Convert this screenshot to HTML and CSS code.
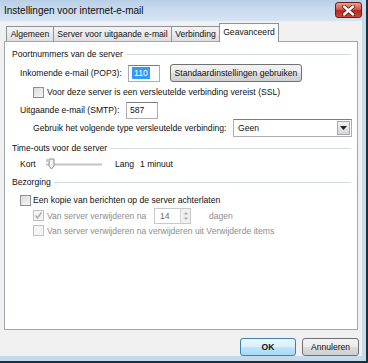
FILE: index.html
```html
<!DOCTYPE html>
<html lang="nl">
<head>
    <meta charset="UTF-8">
    <title>Instellingen voor internet-e-mail</title>
    <link rel="stylesheet" href="styles.css">
</head>
<body>
    <div class="window">
        <div class="titlebar">
            <span class="title">Instellingen voor internet-e-mail</span>
            <div class="close">
                <svg width="13" height="11" viewBox="0 0 13 11">
                    <path d="M2 1.5 L11 9.5 M11 1.5 L2 9.5" stroke="#5a1510" stroke-width="4" stroke-linecap="round"/>
                    <path d="M2 1.5 L11 9.5 M11 1.5 L2 9.5" stroke="#fff" stroke-width="2.4" stroke-linecap="round"/>
                </svg>
            </div>
        </div>

        <div class="client">
            <!-- Tabbladen -->
            <div class="tabs">
                <div class="tab tab-1">Algemeen</div>
                <div class="tab tab-2">Server voor uitgaande e-mail</div>
                <div class="tab tab-3">Verbinding</div>
                <div class="tab active">Geavanceerd</div>
            </div>

            <div class="panel">
                <div class="group-head"><span>Poortnummers van de server</span></div>

                <div class="row row-pop">
                    <span class="label label-pop">Inkomende e-mail (POP3):</span>
                    <div class="input input-pop"><span class="selected">110</span></div>
                    <div class="btn btn-default-settings">Standaardinstellingen gebruiken</div>
                </div>

                <div class="row row-ssl sub">
                    <span class="check"></span>
                    <span class="check-text">Voor deze server is een versleutelde verbinding vereist (SSL)</span>
                </div>

                <div class="row row-smtp">
                    <span class="label label-smtp">Uitgaande e-mail (SMTP):</span>
                    <div class="input input-smtp">587</div>
                </div>

                <div class="row row-type sub">
                    <span class="label label-type">Gebruik het volgende type versleutelde verbinding:</span>
                    <div class="select">
                        <span>Geen</span>
                        <span class="select-arrow">
                            <svg width="7" height="4" viewBox="0 0 7 4"><path d="M0 0 H7 L3.5 4 Z" fill="#222"/></svg>
                        </span>
                    </div>
                </div>

                <div class="group-head group-timeout"><span>Time-outs voor de server</span></div>

                <div class="row row-slider">
                    <span class="label label-kort">Kort</span>
                    <svg class="slider" width="58" height="12" viewBox="0 0 58 12">
                        <line x1="1" y1="6.5" x2="57" y2="6.5" stroke="#c4c4c4" stroke-width="2"/>
                        <line x1="2" y1="1" x2="2" y2="4" stroke="#999"/>
                        <path d="M4 1 H9 V8 L6.5 11 L4 8 Z" fill="#eef0f2" stroke="#8a8f96" stroke-width="1"/>
                    </svg>
                    <span class="label label-lang">Lang</span>
                    <span>1 minuut</span>
                </div>

                <div class="group-head group-delivery"><span>Bezorging</span></div>

                <div class="row row-copy">
                    <span class="check"></span>
                    <span class="check-text copy-text">Een kopie van berichten op de server achterlaten</span>
                </div>

                <div class="row row-days sub disabled">
                    <span class="check checked">
                        <svg width="9" height="9" viewBox="0 0 9 9"><path d="M1.5 4.5 L3.5 7 L7.5 1.5" stroke="#a9b2bb" stroke-width="1.6" fill="none"/></svg>
                    </span>
                    <span class="check-text days-text">Van server verwijderen na</span>
                    <div class="spin">
                        <span class="spin-value">14</span>
                        <span class="spin-buttons">
                            <svg width="8" height="12" viewBox="0 0 8 12">
                                <path d="M1.5 4.5 L4 2 L6.5 4.5 Z" fill="#b0b0b0"/>
                                <path d="M1.5 7.5 L4 10 L6.5 7.5 Z" fill="#b0b0b0"/>
                            </svg>
                        </span>
                    </div>
                    <span class="days-unit">dagen</span>
                </div>

                <div class="row row-deleted sub disabled">
                    <span class="check"></span>
                    <span class="check-text">Van server verwijderen na verwijderen uit Verwijderde items</span>
                </div>
            </div>

            <div class="footer">
                <div class="btn btn-ok">OK</div>
                <div class="btn btn-cancel">Annuleren</div>
            </div>
        </div>
    </div>
</body>
</html>
```

FILE: styles.css
```css
* {
    margin: 0;
    padding: 0;
    box-sizing: border-box;
}

body {
    width: 368px;
    height: 363px;
    overflow: hidden;
    background: #1e2e3b;
    font-family: "Liberation Sans", Arial, sans-serif;
    font-size: 8.6px;
    color: #111;
    white-space: nowrap;
}

.window {
    width: 366px;
    height: 361px;
    border-right: 4px solid #c6daee;
    border-bottom: 5px solid #c6daee;
    display: flex;
    flex-direction: column;
}

/* Titelbalk */
.titlebar {
    height: 22px;
    display: flex;
    align-items: flex-start;
    justify-content: space-between;
    background: linear-gradient(180deg, #b8cfe8 0%, #cadcef 50%, #d6e4f3 100%);
}

.title {
    font-size: 10px;
    padding: 5px 0 0 4px;
    color: #0c0c0c;
}

.close {
    width: 27px;
    height: 16px;
    margin: 2px 0 0 0;
    border: 1px solid #6b1d18;
    border-radius: 3px;
    background: linear-gradient(180deg, #e7a193 0%, #d0574a 45%, #b62b21 55%, #c9473a 100%);
    display: flex;
    align-items: center;
    justify-content: center;
}

/* Venster inhoud */
.client {
    flex: 1;
    background: #f0f0f0;
    padding-top: 1px;
    display: flex;
    flex-direction: column;
}

.tabs {
    display: flex;
    align-items: flex-end;
    height: 19px;
    padding-left: 6px;
    position: relative;
    z-index: 1;
}

.tab {
    height: 15px;
    border: 1px solid #8e939b;
    border-bottom: none;
    background: linear-gradient(180deg, #f3f3f3 0%, #ebebeb 50%, #dedede 100%);
    display: flex;
    align-items: center;
    justify-content: center;
    margin-right: -1px;
    padding-bottom: 1px;
}

.tab-1 { width: 48px; }
.tab-2 { width: 119px; }
.tab-3 { width: 49px; }

.tab.active {
    width: 60px;
    height: 19px;
    background: #fff;
    margin-bottom: -1px;
    padding-bottom: 2px;
}

.panel {
    height: 289px;
    margin: 0 4px;
    border: 1px solid #a2a6ad;
    background: #fff;
    padding-top: 5px;
}

.group-head {
    height: 14px;
    display: flex;
    align-items: center;
    padding: 0 6px 0 7px;
}

.group-head::after {
    content: "";
    flex: 1;
    height: 1px;
    margin-left: 3px;
    background: #d5dbe0;
}

.group-timeout { margin-top: 4px; }
.group-delivery { margin-top: 4px; }

.row {
    display: flex;
    align-items: center;
    padding-left: 15px;
}

.row.sub { padding-left: 28px; }

.row-pop { height: 22px; margin-top: 1px; }
.row-ssl { height: 16px; }
.row-smtp { height: 18px; margin-top: 1px; }
.row-type { height: 18px; }
.row-slider { height: 14px; margin-top: 2px; }
.row-copy { height: 16px; margin-top: 3px; }
.row-days { height: 15px; }
.row-deleted { height: 15px; }

.label { flex: none; }
.label-pop { width: 108px; }
.label-smtp { width: 106px; }
.label-type { width: 200px; }
.label-kort { width: 25px; }
.label-lang { width: 25px; margin-left: 12px; }

.input {
    height: 17px;
    border: 1px solid #abadb3;
    border-top-color: #7a7d84;
    background: #fff;
    display: flex;
    align-items: center;
    padding-left: 3px;
}

.input-pop { width: 32px; }
.input-smtp { width: 32px; }

.selected {
    background: #3399ff;
    color: #fff;
    padding: 1px 2px;
}

.btn {
    height: 18px;
    border: 1px solid #707070;
    border-radius: 3px;
    background: linear-gradient(180deg, #f2f2f2 0%, #ebebeb 50%, #dddddd 51%, #cfcfcf 100%);
    display: flex;
    align-items: center;
    justify-content: center;
}

.btn-default-settings {
    width: 132px;
    margin-left: 10px;
}

.check {
    flex: none;
    width: 11px;
    height: 11px;
    border: 1px solid #8f8f8f;
    background: linear-gradient(135deg, #dcdcdc 0%, #f4f4f4 100%);
    display: flex;
    align-items: center;
    justify-content: center;
}

.check-text { margin-left: 3px; }
.copy-text { margin-left: 2px; }

.select {
    width: 119px;
    height: 18px;
    border: 1px solid #abadb3;
    border-top-color: #7a7d84;
    display: flex;
    align-items: center;
    justify-content: space-between;
    padding: 0 1px 0 4px;
}

.select-arrow {
    width: 13px;
    height: 14px;
    border: 1px solid #a7a7a7;
    background: linear-gradient(180deg, #f2f2f2 0%, #d6d6d6 100%);
    display: flex;
    align-items: center;
    justify-content: center;
}

.slider { flex: none; }

.disabled { color: #8d8d8d; }

.disabled .check {
    border-color: #c2c2c2;
    background: #f4f4f4;
}

.days-text { width: 107px; }

.spin {
    width: 37px;
    height: 16px;
    border: 1px solid #c9c9c9;
    display: flex;
    align-items: center;
    justify-content: space-between;
    color: #6d6d6d;
    padding-left: 5px;
}

.spin-buttons {
    width: 10px;
    height: 14px;
    border-left: 1px solid #d4d4d4;
    background: #f0f0f0;
    display: flex;
    align-items: center;
    justify-content: center;
}

.days-unit { margin-left: 18px; }

.footer {
    display: flex;
    justify-content: flex-end;
    gap: 6px;
    padding-right: 3px;
    margin-top: 8px;
}

.btn-ok {
    width: 56px;
    border-color: #3c7fb1;
    background: linear-gradient(180deg, #eaf6fd 0%, #d9f0fc 50%, #bee6fd 51%, #a7d9f5 100%);
    font-weight: bold;
}

.btn-cancel {
    width: 57px;
}
```
